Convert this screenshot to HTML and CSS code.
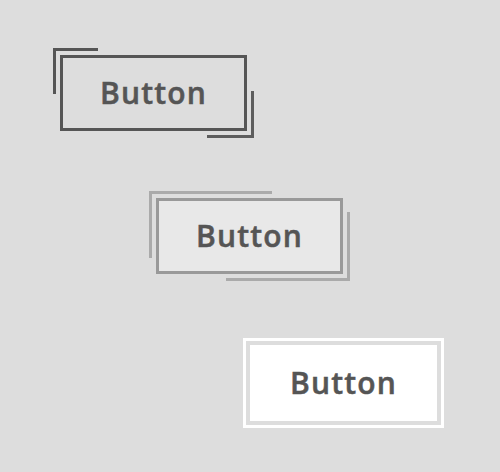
FILE: index.html
```html
<!DOCTYPE html>
<html lang="en">
<head>
  <meta charset="UTF-8">
  <title>Buttons</title>
  <link rel="stylesheet" href="styles.css">
</head>
<body>
  <div class="stack">
    <!-- resting state -->
    <button class="btn btn-rest">Button</button>
    <!-- brackets growing -->
    <button class="btn btn-grow">Button</button>
    <!-- brackets closed -->
    <button class="btn btn-done">Button</button>
  </div>
</body>
</html>
```

FILE: styles.css
```css
body {
  margin: 0;
  background: #dddddd;
  font-family: "Open Sans", Arial, sans-serif;
}

.stack {
  display: flex;
  flex-direction: column;
  align-items: flex-start;
  padding: 55px 0 50px;
}

.btn {
  position: relative;
  box-sizing: border-box;
  width: 187px;
  height: 76px;
  padding: 0 0 2px;
  border: 3px solid #555;
  background: transparent;
  color: #555;
  font-family: inherit;
  font-size: 30px;
  font-weight: 600;
  letter-spacing: 1.2px;
  -webkit-text-stroke: 0.5px #555;
  text-align: center;
  cursor: pointer;
  overflow: visible;
}

/* corner brackets */
.btn::before,
.btn::after {
  content: "";
  position: absolute;
  box-sizing: border-box;
  border: 0 solid #555;
}

.btn::before {
  top: -10px;
  left: -10px;
  border-top-width: 3px;
  border-left-width: 3px;
}

.btn::after {
  right: -10px;
  bottom: -10px;
  border-bottom-width: 3px;
  border-right-width: 3px;
}

.btn-rest {
  margin-left: 60px;
}

.btn-rest::before {
  width: 45px;
  height: 46px;
}

.btn-rest::after {
  width: 47px;
  height: 47px;
  border-color: #5d5d5d;
}

.btn-grow {
  margin-top: 67px;
  margin-left: 156px;
  border-color: #999;
  background: #e8e8e8;
}

.btn-grow::before {
  width: 123px;
  height: 67px;
  border-color: #aaa;
}

.btn-grow::after {
  width: 124px;
  height: 69px;
  border-color: #aaa;
}

.btn-done {
  margin-top: 71px;
  margin-left: 250px;
  border-color: transparent;
  background: #fff;
}

.btn-done::before,
.btn-done::after {
  width: calc(100% + 20px);
  height: calc(100% + 20px);
  border-color: #fff;
}
```
